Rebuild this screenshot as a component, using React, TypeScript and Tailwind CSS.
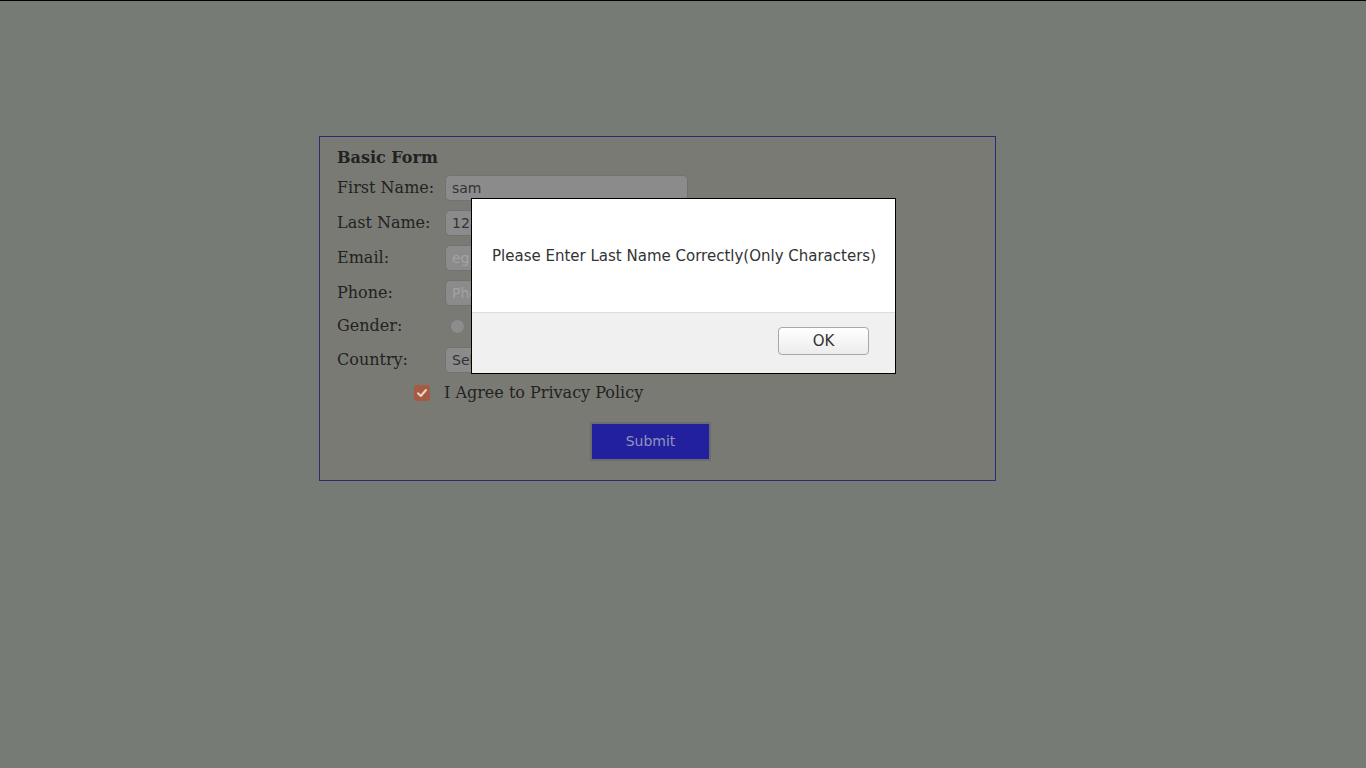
import React from 'react';

const serif = { fontFamily: '"DejaVu Serif", "Liberation Serif", serif' };
const sans = { fontFamily: '"DejaVu Sans", "Liberation Sans", sans-serif' };

interface FieldProps {
    label: string;
    value?: string;
    placeholder?: string;
}

const Field: React.FC<FieldProps> = ({label, value, placeholder}) => (
    <div className="flex items-center h-[26px]">
        <span className="w-[108px] text-[16px] text-[#222]" style={serif}>{label}</span>
        <div
            className="w-[243px] h-[26px] rounded-[5px] border border-[#727272] bg-[#8b8b8b] px-[6px] flex items-center text-[14px]"
            style={sans}
        >
            {value ? (
                <span className="text-[#333]">{value}</span>
            ) : (
                <span className="text-[#a3a3a3]">{placeholder}</span>
            )}
        </div>
    </div>
);

export default function App() {
    return (
        <div className="relative w-full h-[768px] bg-[#767b76] border-t border-black overflow-hidden">
            <div className="pt-[135px] pl-[319px]">
                <div className="w-[677px] h-[345px] border border-[#2b2b78] bg-[#7a7a74] pl-[17px] pt-[11px]">
                    <h2 className="text-[16px] font-bold leading-[20px] text-[#222]" style={serif}>Basic Form</h2>
                    <div className="mt-[7px] flex flex-col gap-[9px]">
                        <Field label="First Name:" value="sam"/>
                        <Field label="Last Name:" value="123"/>
                        <Field label="Email:" placeholder="eg: abc@xyz.com"/>
                        <Field label="Phone:" placeholder="Phone Number"/>
                    </div>
                    <div className="mt-[7px] flex items-center h-[26px]">
                        <span className="w-[113px] text-[16px] text-[#222]" style={serif}>Gender:</span>
                        <span className="w-[15px] h-[15px] rounded-full border border-[#777] bg-[#8c8c8c]"/>
                        <span className="ml-[6px] text-[16px] text-[#222]" style={serif}>Male</span>
                    </div>
                    <div className="mt-[8px]">
                        <Field label="Country:" value="Select Country"/>
                    </div>
                    <div className="mt-[8px] flex items-center h-[24px] pl-[77px]">
                        <span className="w-[16px] h-[16px] rounded-[3px] bg-[#a65a40] flex items-center justify-center">
                            <svg width="12" height="12" viewBox="0 0 12 12">
                                <path d="M2 6.2 L4.8 9 L10 3" fill="none" stroke="#e6d6cf" strokeWidth="2"
                                      strokeLinecap="round" strokeLinejoin="round"/>
                            </svg>
                        </span>
                        <span className="ml-[14px] text-[16px] text-[#222]" style={serif}>I Agree to Privacy Policy</span>
                    </div>
                    <div className="mt-[17px] pl-[253px]">
                        <button
                            className="w-[121px] h-[39px] border-2 border-[#6c6c6c] bg-[#2320a0] text-[14px] text-[#9393b8]"
                            style={sans}
                        >
                            Submit
                        </button>
                    </div>
                </div>
            </div>

            <div className="absolute left-[471px] top-[197px] w-[425px] h-[176px] border border-black bg-white flex flex-col">
                <div className="h-[114px] flex items-center pl-[20px] pt-[2px] border-b border-[#dcdcdc]">
                    <span className="text-[15px] text-[#333]" style={sans}>
                        Please Enter Last Name Correctly(Only Characters)
                    </span>
                </div>
                <div className="flex-1 bg-[#f0f0f0] flex justify-end items-start pt-[14px] pr-[26px]">
                    <button
                        className="w-[91px] h-[28px] rounded-[4px] border border-[#a8a8a8] bg-gradient-to-b from-white to-[#ececec] text-[15px] text-[#333]"
                        style={sans}
                    >
                        OK
                    </button>
                </div>
            </div>
        </div>
    );
}
